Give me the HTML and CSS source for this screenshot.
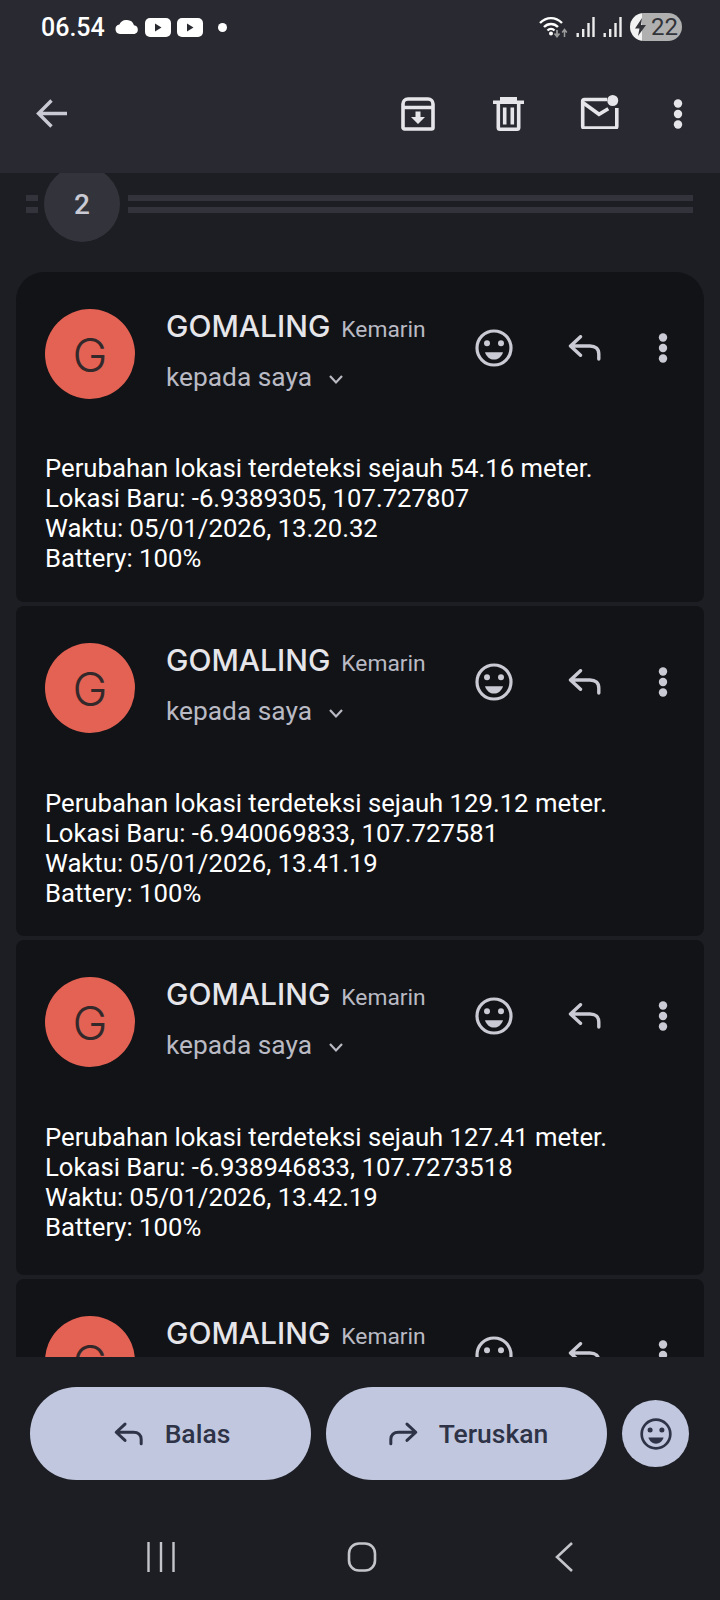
FILE: index.html
```html
<!DOCTYPE html>
<html lang="id">

<head>
    <meta charset="UTF-8">
    <meta name="viewport" content="width=device-width, initial-scale=1.0">
    <title>GOMALING</title>
    <link rel="stylesheet" href="styles.css">
</head>

<body>
    <svg class="defs" width="0" height="0">
        <symbol id="ic-mood" viewBox="0 0 38 38">
            <circle cx="19" cy="19" r="17" fill="none" stroke="currentColor" stroke-width="3.2" />
            <circle cx="12" cy="14.300" r="3" fill="currentColor" />
            <circle cx="26" cy="14.300" r="3" fill="currentColor" />
            <path d="M10 23.200h18c-1.400 4.600-5 7.400-9 7.400s-7.600-2.800-9-7.400z" fill="currentColor" />
        </symbol>
        <symbol id="ic-reply" viewBox="0 0 34 26">
            <path d="M12.500 1.700 2.500 11l10 9.300M3 11h19c5.500 0 8.800 3 8.800 8v5" fill="none" stroke="currentColor" stroke-width="3.400" stroke-linecap="round" stroke-linejoin="round" />
        </symbol>
        <symbol id="ic-forward" viewBox="0 0 34 26">
            <path d="M21.500 1.700l10 9.300-10 9.300M31 11H12c-5.500 0-8.800 3-8.800 8v5" fill="none" stroke="currentColor" stroke-width="3.400" stroke-linecap="round" stroke-linejoin="round" />
        </symbol>
        <symbol id="ic-more" viewBox="0 0 10 30">
            <circle cx="5" cy="4.500" r="4.200" fill="currentColor" />
            <circle cx="5" cy="15" r="4.200" fill="currentColor" />
            <circle cx="5" cy="25.500" r="4.200" fill="currentColor" />
        </symbol>
    </svg>

    <header class="appbar">
        <div class="statusbar">
            <span class="clock">06.54</span>
            <svg class="st-cloud" width="24" height="14" viewBox="0 0 24 14">
                <path d="M5 14a4.800 4.800 0 0 1-.6-9.500A8 8 0 0 1 12 0a7.600 7.600 0 0 1 7 5.200A4.500 4.500 0 0 1 19.500 14z" fill="#fff" />
            </svg>
            <svg class="st-yt" width="26" height="19" viewBox="0 0 26 19">
                <rect width="26" height="19" rx="5" fill="#fff" />
                <path d="M10 5.500v8l6.500-4z" fill="#292a31" />
            </svg>
            <svg class="st-yt" width="26" height="19" viewBox="0 0 26 19">
                <rect width="26" height="19" rx="5" fill="#fff" />
                <path d="M10 5.500v8l6.500-4z" fill="#292a31" />
            </svg>
            <span class="st-dot"></span>
            <span class="st-right">
                <svg width="29" height="22" viewBox="0 0 29 22">
                    <g fill="none" stroke="#fff" stroke-width="2.400">
                        <path d="M1 7c6.500-6.500 15.500-6.500 22 0" />
                        <path d="M5 11c4-4 10-4 14 0" />
                        <path d="M8.500 14.500c2-2 5-2 7 0" />
                    </g>
                    <circle cx="12" cy="17.500" r="2" fill="#fff" />
                    <path d="M18 14v6m-2.500-2.500 2.500 3 2.500-3" fill="none" stroke="#9b9b9b" stroke-width="1.800" />
                    <path d="M25.500 21v-7m-2.300 2.500 2.300-3 2.300 3" fill="none" stroke="#9b9b9b" stroke-width="1.500" />
                </svg>
                <svg class="st-signal" width="19" height="20" viewBox="0 0 19 20">
                    <path d="M0.500 16h2.400v4H0.500zM6 12h2.400v8H6zM11.300 6h2.400v14h-2.400zM16.300 0h2.400v20h-2.400z" fill="#ececec" />
                </svg>
                <svg class="st-signal" width="19" height="20" viewBox="0 0 19 20">
                    <path d="M0.500 16h2.400v4H0.500zM6 12h2.400v8H6zM11.300 6h2.400v14h-2.400zM16.300 0h2.400v20h-2.400z" fill="#ececec" />
                </svg>
                <span class="battery">
                    <svg class="bolt" width="11" height="18" viewBox="0 0 11 18">
                        <path d="M7 0 0 10.500h4.500L3 18l8-11H6z" fill="#33343a" />
                    </svg>
                    <span>22</span>
                </span>
            </span>
        </div>
        <div class="toolbar">
            <svg class="tb-back" width="31" height="29" viewBox="0 0 31 29">
                <path d="M15.500 1.500 2.500 14.500l13 13M3 14.500h28" fill="none" stroke="#c9cad3" stroke-width="3.400" />
            </svg>
            <svg class="tb-archive" width="34" height="34" viewBox="0 0 34 34">
                <path d="M7 2h20c2.800 0 5 2.200 5 5v23.500c0 .8-.7 1.500-1.500 1.500h-27c-.8 0-1.500-.7-1.500-1.500V7c0-2.800 2.200-5 5-5zM2 10.500h30" fill="none" stroke="#e6e6ea" stroke-width="3.600" stroke-linejoin="round" />
                <path d="M14.500 14.500h5v5.500h4.500L17 27l-7-7h4.500z" fill="#e6e6ea" />
            </svg>
            <svg class="tb-trash" width="31" height="34" viewBox="0 0 31 34">
                <path d="M0 3.500h31v3.600H0zM7 0h17v4H7z" fill="#e6e6ea" />
                <path d="M5.300 6v24.500c0 1 .8 1.700 1.700 1.700h17c1 0 1.700-.7 1.700-1.700V6" fill="none" stroke="#e6e6ea" stroke-width="3.600" />
                <path d="M11.700 10.500v17M19.300 10.500v17" stroke="#e6e6ea" stroke-width="3.600" />
            </svg>
            <svg class="tb-mail" width="39" height="34" viewBox="0 0 39 34">
                <path d="M27 4.500H4.500c-1 0-1.800.8-1.800 1.800v25c0 1 .8 1.800 1.800 1.800h30.500c1 0 1.800-.8 1.800-1.800V13" fill="none" stroke="#e6e6ea" stroke-width="3.600" stroke-linejoin="round" />
                <path d="M3.500 8 19 19.300l9.300-5.600" fill="none" stroke="#e6e6ea" stroke-width="3.600" />
                <circle cx="32.700" cy="5.500" r="5.500" fill="#e6e6ea" />
            </svg>
            <svg class="tb-more icon-light" width="10" height="30"><use href="#ic-more" /></svg>
        </div>
    </header>

    <main class="thread">
        <div class="collapsed">
            <span class="stub"></span>
            <span class="count">2</span>
            <span class="rails"></span>
        </div>

        <article class="card card-first">
            <div class="card-head">
                <div class="avatar">G</div>
                <div class="meta">
                    <div class="from"><span class="name">GOMALING</span> <span class="date">Kemarin</span></div>
                    <div class="to">kepada saya
                        <svg class="chev" width="16" height="11" viewBox="0 0 16 11">
                            <path d="M2 2 8 8.500 14 2" fill="none" stroke="#b9bac3" stroke-width="2.200" />
                        </svg>
                    </div>
                </div>
                <div class="actions">
                    <svg class="a-mood" width="38" height="38"><use href="#ic-mood" /></svg>
                    <svg class="a-reply" width="34" height="26"><use href="#ic-reply" /></svg>
                    <svg class="a-more" width="10" height="30"><use href="#ic-more" /></svg>
                </div>
            </div>
            <p class="body-text">Perubahan lokasi terdeteksi sejauh 54.16 meter.<br>Lokasi Baru: -6.9389305, 107.727807<br>Waktu: 05/01/2026, 13.20.32<br>Battery: 100%</p>
        </article>

        <article class="card">
            <div class="card-head">
                <div class="avatar">G</div>
                <div class="meta">
                    <div class="from"><span class="name">GOMALING</span> <span class="date">Kemarin</span></div>
                    <div class="to">kepada saya
                        <svg class="chev" width="16" height="11" viewBox="0 0 16 11">
                            <path d="M2 2 8 8.500 14 2" fill="none" stroke="#b9bac3" stroke-width="2.200" />
                        </svg>
                    </div>
                </div>
                <div class="actions">
                    <svg class="a-mood" width="38" height="38"><use href="#ic-mood" /></svg>
                    <svg class="a-reply" width="34" height="26"><use href="#ic-reply" /></svg>
                    <svg class="a-more" width="10" height="30"><use href="#ic-more" /></svg>
                </div>
            </div>
            <p class="body-text">Perubahan lokasi terdeteksi sejauh 129.12 meter.<br>Lokasi Baru: -6.940069833, 107.727581<br>Waktu: 05/01/2026, 13.41.19<br>Battery: 100%</p>
        </article>

        <article class="card card-tall">
            <div class="card-head">
                <div class="avatar">G</div>
                <div class="meta">
                    <div class="from"><span class="name">GOMALING</span> <span class="date">Kemarin</span></div>
                    <div class="to">kepada saya
                        <svg class="chev" width="16" height="11" viewBox="0 0 16 11">
                            <path d="M2 2 8 8.500 14 2" fill="none" stroke="#b9bac3" stroke-width="2.200" />
                        </svg>
                    </div>
                </div>
                <div class="actions">
                    <svg class="a-mood" width="38" height="38"><use href="#ic-mood" /></svg>
                    <svg class="a-reply" width="34" height="26"><use href="#ic-reply" /></svg>
                    <svg class="a-more" width="10" height="30"><use href="#ic-more" /></svg>
                </div>
            </div>
            <p class="body-text">Perubahan lokasi terdeteksi sejauh 127.41 meter.<br>Lokasi Baru: -6.938946833, 107.7273518<br>Waktu: 05/01/2026, 13.42.19<br>Battery: 100%</p>
        </article>

        <article class="card">
            <div class="card-head">
                <div class="avatar">G</div>
                <div class="meta">
                    <div class="from"><span class="name">GOMALING</span> <span class="date">Kemarin</span></div>
                </div>
                <div class="actions">
                    <svg class="a-mood" width="38" height="38"><use href="#ic-mood" /></svg>
                    <svg class="a-reply" width="34" height="26"><use href="#ic-reply" /></svg>
                    <svg class="a-more" width="10" height="30"><use href="#ic-more" /></svg>
                </div>
            </div>
        </article>
    </main>

    <footer class="bottom">
        <div class="btn-row">
            <button class="pill">
                <svg width="30" height="26"><use href="#ic-reply" /></svg>
                <span>Balas</span>
            </button>
            <button class="pill">
                <svg width="30" height="26"><use href="#ic-forward" /></svg>
                <span>Teruskan</span>
            </button>
            <button class="round">
                <svg width="32" height="32"><use href="#ic-mood" /></svg>
            </button>
        </div>
        <nav class="navbar">
            <svg width="28" height="30" viewBox="0 0 28 30">
                <path d="M1.500 0v30M14 0v30M26.500 0v30" stroke="#c4c5ca" stroke-width="2.400" />
            </svg>
            <svg class="nav-home" width="30" height="30" viewBox="0 0 30 30">
                <rect x="2" y="1.500" width="26" height="27" rx="10" fill="none" stroke="#c4c5ca" stroke-width="2.600" />
            </svg>
            <svg width="20" height="30" viewBox="0 0 20 30">
                <path d="M18 1 3 15l15 14" fill="none" stroke="#c4c5ca" stroke-width="2.600" />
            </svg>
        </nav>
    </footer>
</body>

</html>
```

FILE: styles.css
```css
* {
    box-sizing: border-box;
}

body {
    margin: 0;
    width: 720px;
    height: 1600px;
    display: flex;
    flex-direction: column;
    overflow: hidden;
    background-color: #1d1e24;
    font-family: Roboto, 'Noto Sans', sans-serif;
    color: #fff;
}

.defs {
    position: absolute;
}

/* top bars */
.appbar {
    height: 173px;
    flex-shrink: 0;
    background-color: #292a31;
}

.statusbar {
    height: 54px;
    display: flex;
    align-items: center;
    padding-left: 41px;
    padding-right: 38px;
}

.clock {
    font-size: 25px;
    font-weight: 500;
    width: 74px;
}

.st-yt {
    margin-left: 6px;
}

.st-dot {
    width: 9px;
    height: 9px;
    border-radius: 50%;
    background-color: #fff;
    margin-left: 15px;
}

.st-right {
    margin-left: auto;
    display: flex;
    align-items: center;
    gap: 8px;
}

.battery {
    width: 52px;
    height: 28px;
    border-radius: 14px;
    background: linear-gradient(90deg, #f2f2f2 0, #f2f2f2 12px, #b0b0b0 12px);
    display: flex;
    align-items: center;
    color: #33343a;
    font-size: 24px;
    padding-left: 5px;
    gap: 5px;
}

.toolbar {
    height: 119px;
    display: flex;
    align-items: center;
    padding-left: 36px;
    padding-bottom: 0;
}

.tb-back {
    margin-right: 334px;
}

.tb-archive {
    margin-right: 58px;
}

.tb-trash {
    margin-right: 56px;
}

.tb-mail {
    margin-top: -4px;
    margin-right: 54px;
}

.icon-light {
    color: #e6e6ea;
}

/* thread */
.thread {
    flex: 1;
    min-height: 0;
    overflow: hidden;
    display: flex;
    flex-direction: column;
    gap: 4px;
}

.collapsed {
    height: 99px;
    flex-shrink: 0;
    margin-bottom: -4px;
    display: flex;
    padding-left: 26px;
    padding-right: 27px;
    overflow: hidden;
}

.stub,
.rails {
    height: 18px;
    margin-top: 22px;
    border-top: 6px solid #33343b;
    border-bottom: 6px solid #33343b;
}

.stub {
    width: 12px;
}

.rails {
    flex: 1;
}

.count {
    width: 76px;
    height: 76px;
    margin-top: -7px;
    margin-left: 6px;
    margin-right: 8px;
    border-radius: 50%;
    background-color: #33343b;
    color: #c9cad3;
    font-size: 28px;
    font-weight: 500;
    display: flex;
    align-items: center;
    justify-content: center;
}

.card {
    flex-shrink: 0;
    height: 330px;
    margin-left: 16px;
    margin-right: 16px;
    border-radius: 8px;
    background-color: #121317;
    padding-top: 37px;
}

.card-first {
    border-top-left-radius: 28px;
    border-top-right-radius: 28px;
}

.card-tall {
    height: 335px;
}

.card-head {
    display: flex;
    padding-left: 29px;
}

.avatar {
    width: 90px;
    height: 90px;
    border-radius: 50%;
    flex-shrink: 0;
    background-color: #e46254;
    color: #33292b;
    font-family: Inter, sans-serif;
    font-size: 47px;
    font-weight: 300;
    display: flex;
    align-items: center;
    justify-content: center;
}

.meta {
    margin-left: 31px;
    width: 309px;
}

.from {
    line-height: 35px;
    white-space: nowrap;
}

.name {
    font-family: Inter, sans-serif;
    font-size: 30px;
    font-weight: 500;
    color: #e6e6ea;
}

.date {
    font-size: 22.800px;
    color: #b9bac3;
    margin-left: 7px;
}

.to {
    margin-top: 13px;
    font-size: 26.300px;
    line-height: 30px;
    color: #b9bac3;
}

.chev {
    margin-left: 9px;
    vertical-align: 1px;
}

.actions {
    display: flex;
    color: #c9cad3;
    padding-top: 20px;
}

.a-reply {
    margin-left: 55px;
    margin-top: 6px;
}

.a-more {
    margin-left: 56px;
    margin-top: 4px;
}

.body-text {
    margin: 54px 0 0 29px;
    font-size: 25.700px;
    line-height: 30px;
    color: #fff;
}

.card + .card .body-text {
    margin-top: 55px;
}

/* bottom */
.bottom {
    height: 243px;
    flex-shrink: 0;
    background-color: #1d1e24;
    padding-top: 30px;
}

.btn-row {
    display: flex;
    align-items: center;
    padding-left: 30px;
}

.pill {
    width: 281px;
    height: 93px;
    border: none;
    border-radius: 47px;
    margin-right: 15px;
    padding: 0 0 0 3px;
    background-color: #c1c7de;
    color: #2e3347;
    font-family: Roboto, sans-serif;
    font-size: 26.500px;
    font-weight: 500;
    display: flex;
    align-items: center;
    justify-content: center;
    gap: 21px;
}

.round {
    width: 67px;
    height: 67px;
    border: none;
    border-radius: 50%;
    padding: 0;
    background-color: #c1c7de;
    color: #2e3347;
    display: flex;
    align-items: center;
    justify-content: center;
}

.navbar {
    display: flex;
    align-items: center;
    justify-content: space-between;
    margin-top: 62px;
    padding-left: 147px;
    padding-right: 146px;
}

.nav-home {
    margin-right: 6px;
}
```
